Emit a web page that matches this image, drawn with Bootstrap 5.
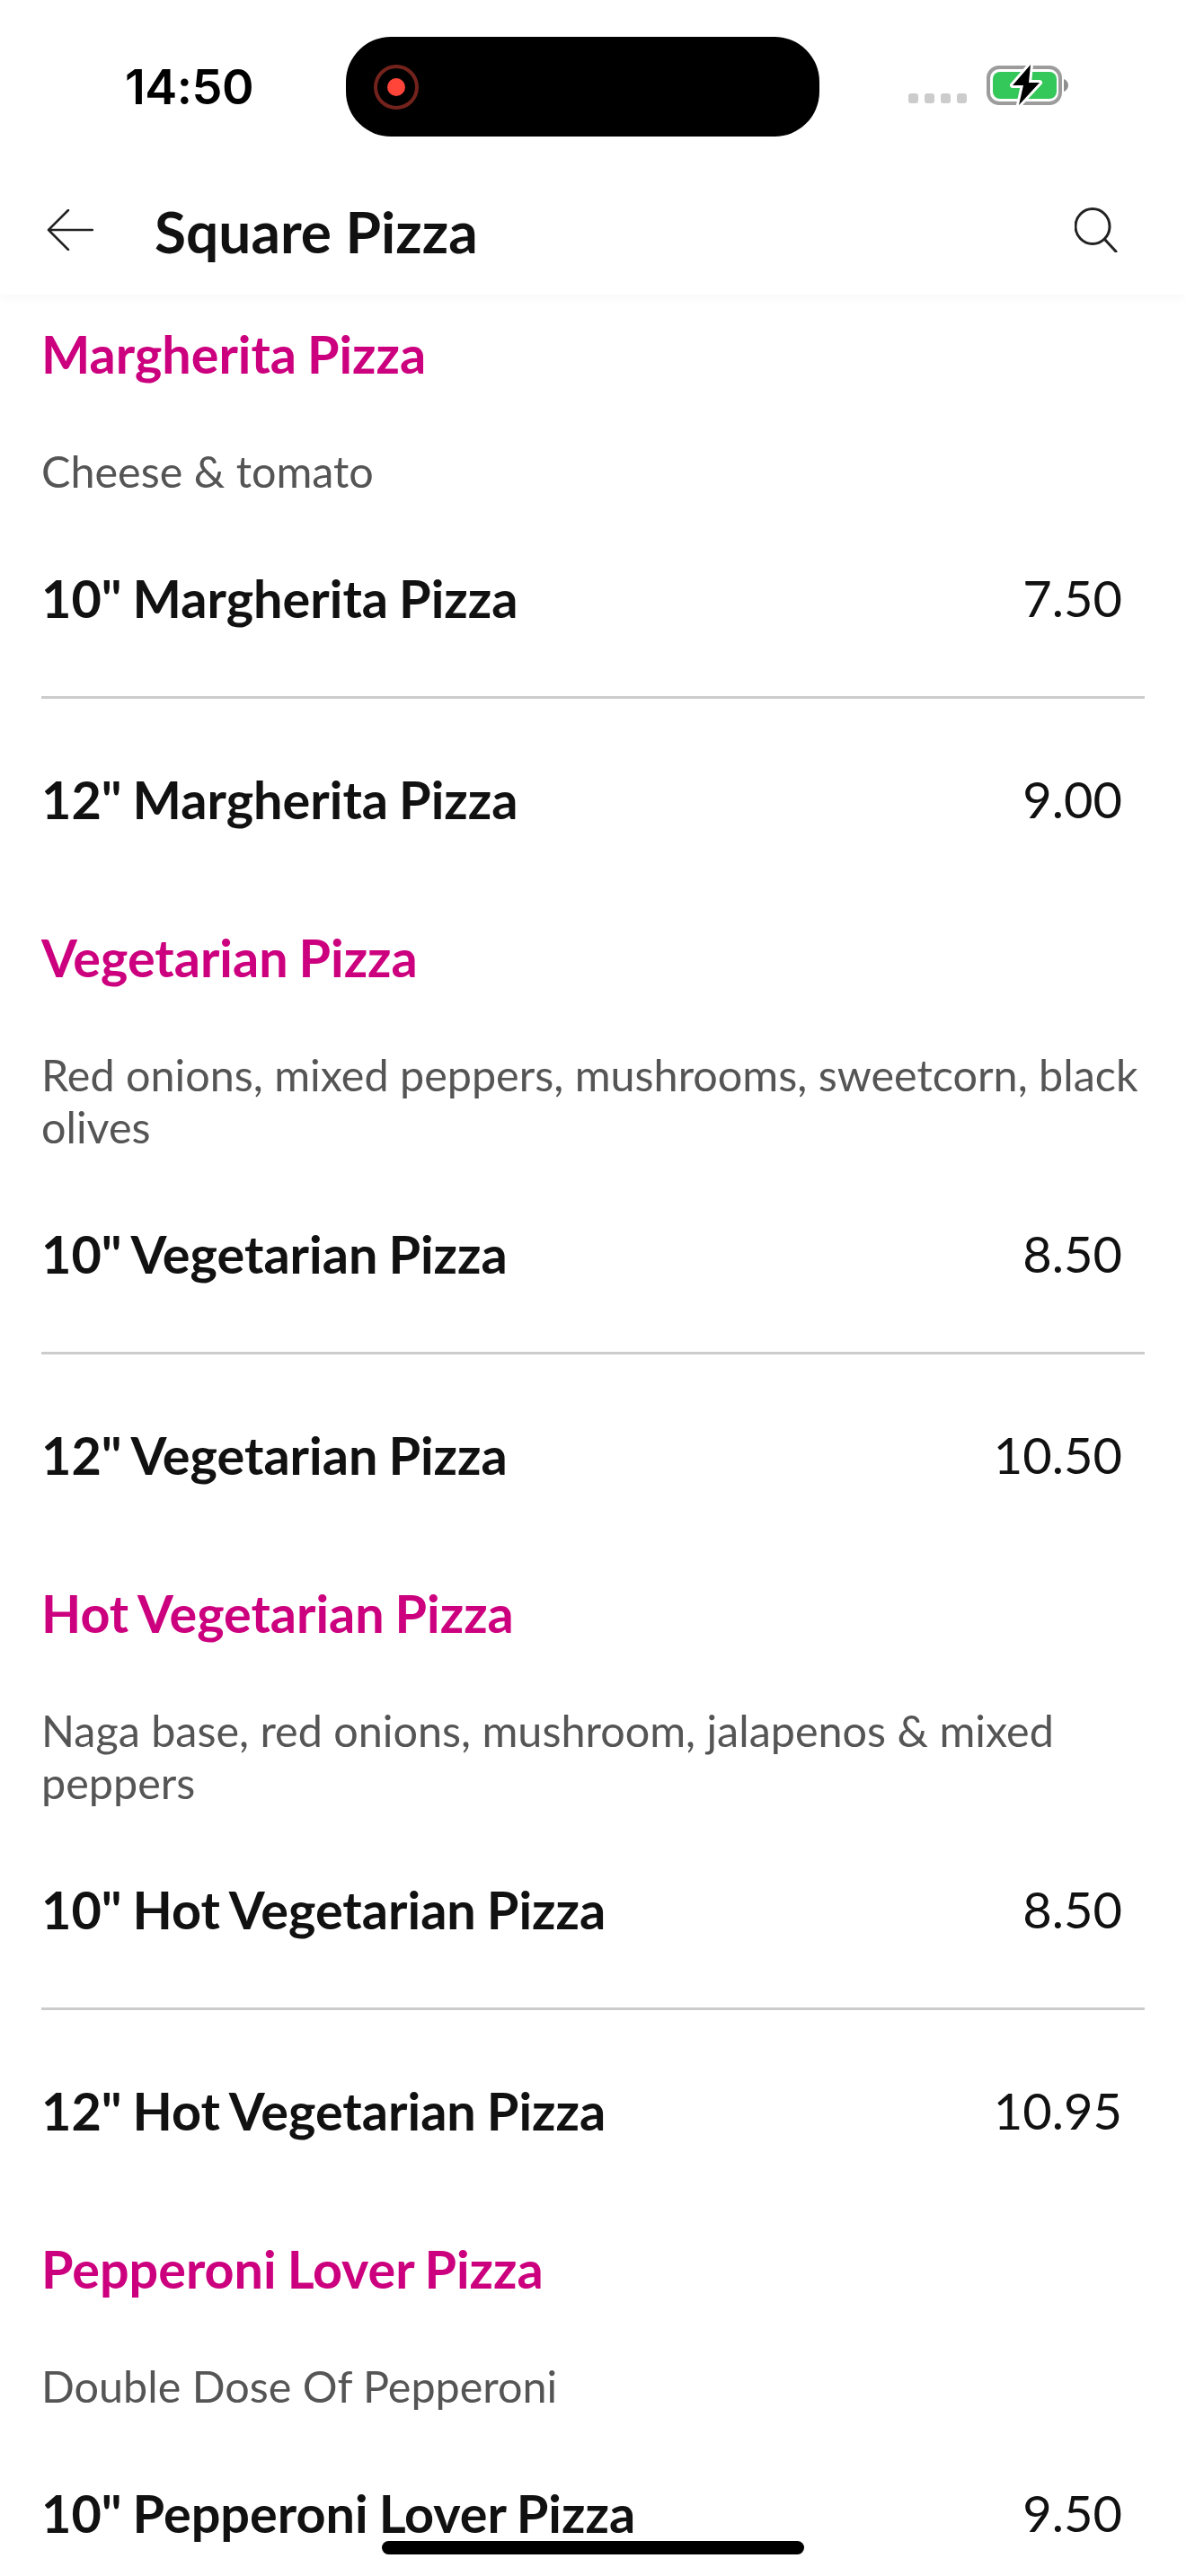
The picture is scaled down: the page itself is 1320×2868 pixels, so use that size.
<!DOCTYPE html>
<html lang="en">

<head>
    <meta charset="UTF-8">
    <meta name="viewport" content="width=device-width, initial-scale=1.0">
    <title>Square Pizza</title>
    <link href="https://cdn.jsdelivr.net/npm/bootstrap@5.3.0/dist/css/bootstrap.min.css" rel="stylesheet">
    <style>
        body { font-family: Lato, "Noto Sans", sans-serif; color: #111; background: #fff; height: 2868px; overflow: hidden; }
        .status-bar { height: 192px; padding: 41px 128px 0 139px; }
        .status-time { font-family: Inter, "Liberation Sans", sans-serif; font-size: 54px; font-weight: 600; line-height: 111px; width: 247px; color: #000; letter-spacing: -.5px; }
        .island { width: 528px; height: 111px; background: #000; border-radius: 50px; padding-left: 31px; }
        .status-right { margin-left: 99px; gap: 20px; padding-top: 29px; }
        .signal-dots { gap: 7px; padding-top: 34px; }
        .signal-dots span { width: 11px; height: 11px; border-radius: 3px; background: #ccc; }
        .top-bar { height: 136px; padding: 0 76px 8px 52px; box-shadow: 0 6px 10px rgba(0, 0, 0, .025); position: relative; }
        .page-title { font-size: 64px; font-weight: 700; margin: 4px 0 0 68px; color: #111; }
        .menu-section { padding: 33px 46px 0; }
        .menu-section:first-of-type { padding-top: 32px; }
        .section-name { font-size: 57.5px; font-weight: 700; color: #cc007e; line-height: 68px; margin: 0; word-spacing: -2px; }
        .section-desc { font-size: 48.5px; line-height: 58px; color: #555; margin: 67px 0 0; }
        .menu-list { margin-top: -2px; }
        .menu-list .menu-row { padding: 81px 25px 75px 0; border-color: #ccc; border-width: 0 0 3px; font-size: 56px; line-height: 68px; color: #111; background: transparent; }
        .menu-list .menu-row + .menu-row { padding-top: 78px; }
        .menu-list .menu-row:last-child { border-bottom-width: 0; }
        .menu-row b { font-weight: 700; font-size: 57.6px; word-spacing: -2px; }
        .home-indicator { bottom: 24px; width: 470px; height: 15px; border-radius: 8px; background: #000; }
    </style>
</head>

<body>
    <div class="status-bar d-flex align-items-start">
        <div class="status-time">14:50</div>
        <div class="island d-flex align-items-center">
            <svg width="50" height="50" viewBox="0 0 50 50">
                <circle cx="25" cy="25" r="23" fill="none" stroke="#74231c" stroke-width="4"/>
                <circle cx="25" cy="25" r="10" fill="#ff453a"/>
            </svg>
        </div>
        <div class="status-right d-flex">
            <div class="signal-dots d-flex"><span></span><span></span><span></span><span></span></div>
            <svg width="96" height="50" viewBox="0 0 96 50">
                <rect x="4" y="5" width="80" height="40" rx="12" fill="#fff" stroke="#9c9c9c" stroke-width="4"/>
                <rect x="9" y="10" width="71" height="30" rx="8" fill="#34c759"/>
                <path d="M88 18c3 1 5 4 5 7s-2 6-5 7z" fill="#8e8e8e"/>
                <path d="M51 2 31 25h12l-5 22 23-25H49z" fill="#000" stroke="#fff" stroke-width="6" stroke-linejoin="round" paint-order="stroke"/>
            </svg>
        </div>
    </div>

    <div class="top-bar d-flex align-items-center">
        <svg width="52" height="46" viewBox="0 0 52 46" fill="none" stroke="#222" stroke-width="2.5" stroke-linecap="round" stroke-linejoin="round">
            <path d="M51 23H2M24 1 2 23l22 22"/>
        </svg>
        <h1 class="page-title flex-grow-1">Square Pizza</h1>
        <svg width="48" height="50" viewBox="0 0 48 50" fill="none" stroke="#222" stroke-width="3" stroke-linecap="round">
            <ellipse cx="20" cy="21" rx="19" ry="19.5"/>
            <path d="M34 36l12 13"/>
        </svg>
    </div>

    <section class="menu-section">
        <h2 class="section-name">Margherita Pizza</h2>
        <p class="section-desc">Cheese &amp; tomato</p>
        <ul class="list-group list-group-flush menu-list">
            <li class="list-group-item menu-row d-flex justify-content-between align-items-center"><b>10" Margherita Pizza</b><span>7.50</span></li>
            <li class="list-group-item menu-row d-flex justify-content-between align-items-center"><b>12" Margherita Pizza</b><span>9.00</span></li>
        </ul>
    </section>

    <section class="menu-section">
        <h2 class="section-name">Vegetarian Pizza</h2>
        <p class="section-desc">Red onions, mixed peppers, mushrooms, sweetcorn, black olives</p>
        <ul class="list-group list-group-flush menu-list">
            <li class="list-group-item menu-row d-flex justify-content-between align-items-center"><b>10" Vegetarian Pizza</b><span>8.50</span></li>
            <li class="list-group-item menu-row d-flex justify-content-between align-items-center"><b>12" Vegetarian Pizza</b><span>10.50</span></li>
        </ul>
    </section>

    <section class="menu-section">
        <h2 class="section-name">Hot Vegetarian Pizza</h2>
        <p class="section-desc">Naga base, red onions, mushroom, jalapenos &amp; mixed peppers</p>
        <ul class="list-group list-group-flush menu-list">
            <li class="list-group-item menu-row d-flex justify-content-between align-items-center"><b>10" Hot Vegetarian Pizza</b><span>8.50</span></li>
            <li class="list-group-item menu-row d-flex justify-content-between align-items-center"><b>12" Hot Vegetarian Pizza</b><span>10.95</span></li>
        </ul>
    </section>

    <section class="menu-section">
        <h2 class="section-name">Pepperoni Lover Pizza</h2>
        <p class="section-desc">Double Dose Of Pepperoni</p>
        <ul class="list-group list-group-flush menu-list">
            <li class="list-group-item menu-row d-flex justify-content-between align-items-center"><b>10" Pepperoni Lover Pizza</b><span>9.50</span></li>
        </ul>
    </section>

    <div class="home-indicator position-fixed start-50 translate-middle-x"></div>

    <script src="https://cdn.jsdelivr.net/npm/bootstrap@5.3.0/dist/js/bootstrap.bundle.min.js"></script>
</body>

</html>
